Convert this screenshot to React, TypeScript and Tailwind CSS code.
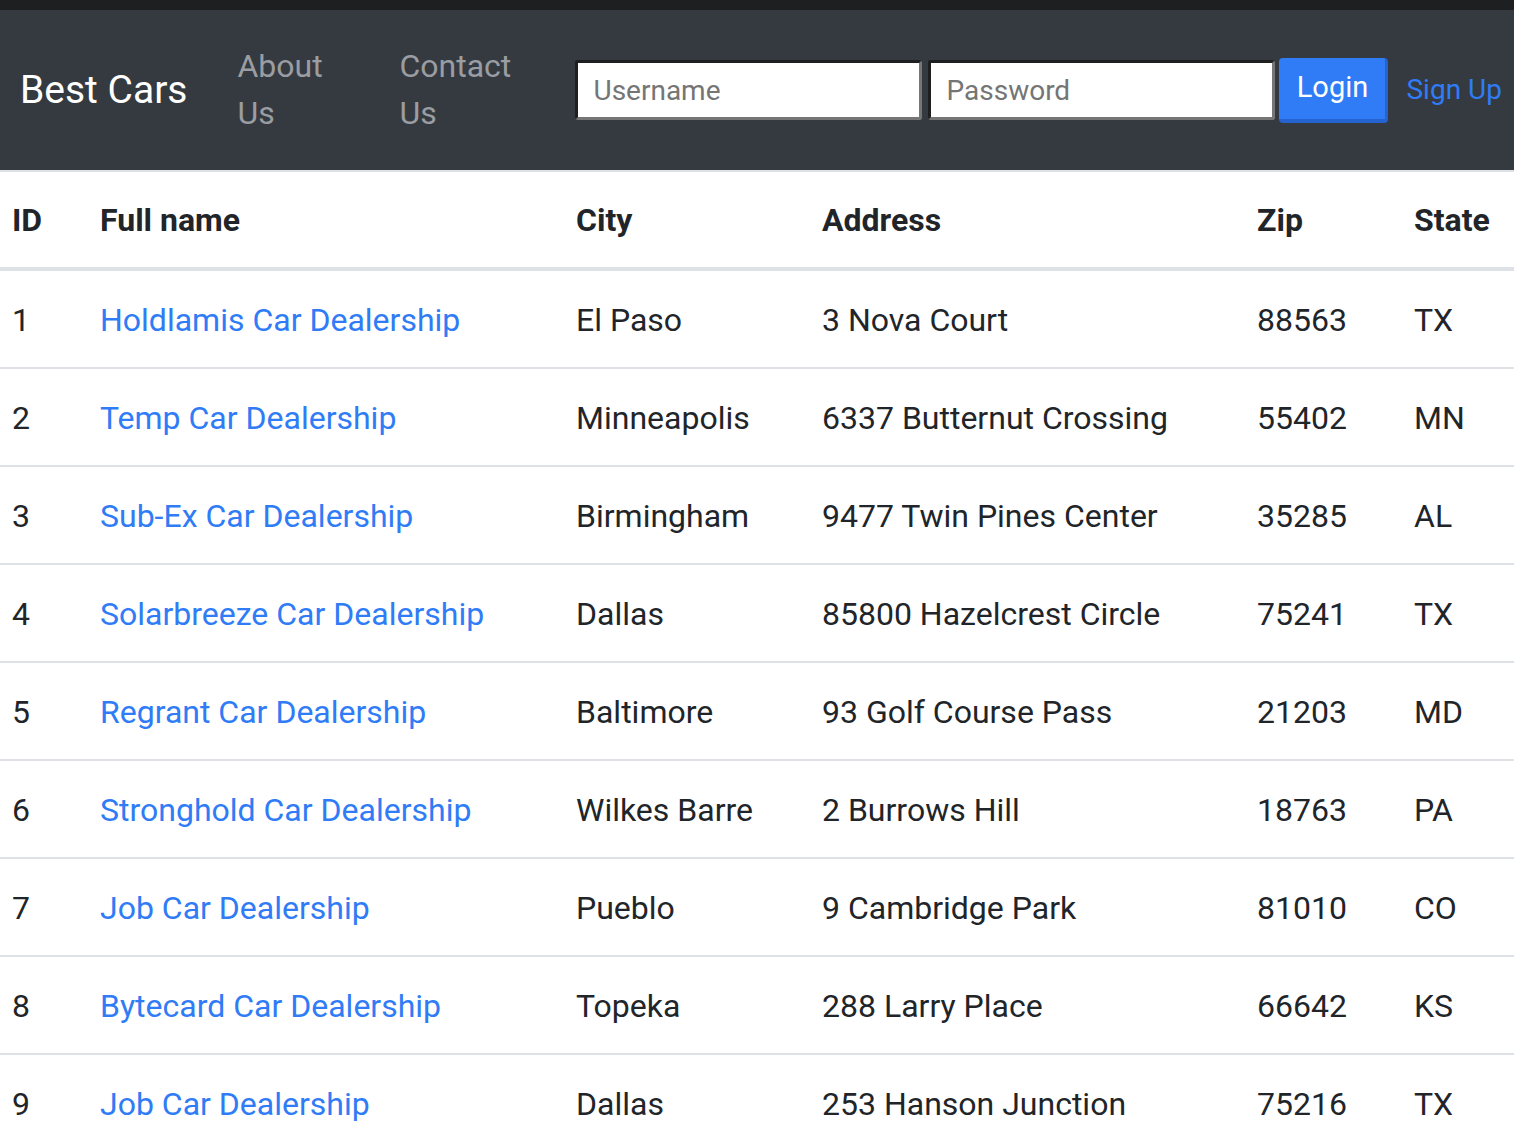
const dealers = [
  { id: 1, name: 'Holdlamis Car Dealership', city: 'El Paso', address: '3 Nova Court', zip: '88563', state: 'TX' },
  { id: 2, name: 'Temp Car Dealership', city: 'Minneapolis', address: '6337 Butternut Crossing', zip: '55402', state: 'MN' },
  { id: 3, name: 'Sub-Ex Car Dealership', city: 'Birmingham', address: '9477 Twin Pines Center', zip: '35285', state: 'AL' },
  { id: 4, name: 'Solarbreeze Car Dealership', city: 'Dallas', address: '85800 Hazelcrest Circle', zip: '75241', state: 'TX' },
  { id: 5, name: 'Regrant Car Dealership', city: 'Baltimore', address: '93 Golf Course Pass', zip: '21203', state: 'MD' },
  { id: 6, name: 'Stronghold Car Dealership', city: 'Wilkes Barre', address: '2 Burrows Hill', zip: '18763', state: 'PA' },
  { id: 7, name: 'Job Car Dealership', city: 'Pueblo', address: '9 Cambridge Park', zip: '81010', state: 'CO' },
  { id: 8, name: 'Bytecard Car Dealership', city: 'Topeka', address: '288 Larry Place', zip: '66642', state: 'KS' },
  { id: 9, name: 'Job Car Dealership', city: 'Dallas', address: '253 Hanson Junction', zip: '75216', state: 'TX' },
];

const cols = 'grid grid-cols-[88px_476px_246px_435px_157px_1fr]';

const App = () => {
  return (
    <div className="min-h-[1140px] bg-white font-['Roboto','Liberation_Sans',sans-serif] text-[#212529] overflow-hidden">
      <div className="h-[10px] bg-[#1e1f20]" />
      {/* Navbar */}
      <nav className="h-[162px] bg-[#353a41] flex items-center border-b-2 border-[#dee2e6]">
        <span className="ml-[20px] text-[39px] text-white leading-none">Best Cars</span>
        <a className="ml-[50px] w-[100px] text-[32px] leading-[47px] text-[#9a9da1]">About Us</a>
        <a className="ml-[62px] w-[130px] text-[32px] leading-[47px] text-[#9a9da1]">Contact Us</a>
        <div className="ml-[46px] flex items-center gap-[6px]">
          <input
            placeholder="Username"
            className="w-[347px] h-[60px] bg-white rounded-[3px] border-[3px] border-t-[#1e1f20] border-l-[#1e1f20] border-b-[#767676] border-r-[#767676] px-[15px] text-[28px] placeholder:text-[#757575] outline-none"
          />
          <input
            placeholder="Password"
            type="password"
            className="w-[347px] h-[60px] bg-white rounded-[3px] border-[3px] border-t-[#1e1f20] border-l-[#1e1f20] border-b-[#767676] border-r-[#767676] px-[15px] text-[28px] placeholder:text-[#757575] outline-none"
          />
          <button className="-ml-[2px] w-[109px] h-[65px] bg-[#2f7cf6] text-white text-[29px] rounded-[4px] border-b-[4px] border-r-[3px] border-[#2563d0]">
            Login
          </button>
          <a className="ml-[12px] text-[28px] text-[#2f7cf6]">Sign Up</a>
        </div>
      </nav>

      {/* Table */}
      <div>
        <div className={`${cols} h-[99px] items-center border-b-4 border-[#dee2e6] text-[32px] font-bold`}>
          <div className="pl-[12px]">ID</div>
          <div className="pl-[12px]">Full name</div>
          <div className="pl-[12px]">City</div>
          <div className="pl-[12px]">Address</div>
          <div className="pl-[12px]">Zip</div>
          <div className="pl-[12px]">State</div>
        </div>
        {dealers.map((d) => (
          <div key={d.id} className={`${cols} h-[98px] items-center border-b-2 border-[#dee2e6] text-[32px] pt-[2px]`}>
            <div className="pl-[12px]">{d.id}</div>
            <div className="pl-[12px]">
              <a className="text-[#2f7cf6]">{d.name}</a>
            </div>
            <div className="pl-[12px]">{d.city}</div>
            <div className="pl-[12px]">{d.address}</div>
            <div className="pl-[12px]">{d.zip}</div>
            <div className="pl-[12px]">{d.state}</div>
          </div>
        ))}
      </div>
    </div>
  );
};

export default App;
